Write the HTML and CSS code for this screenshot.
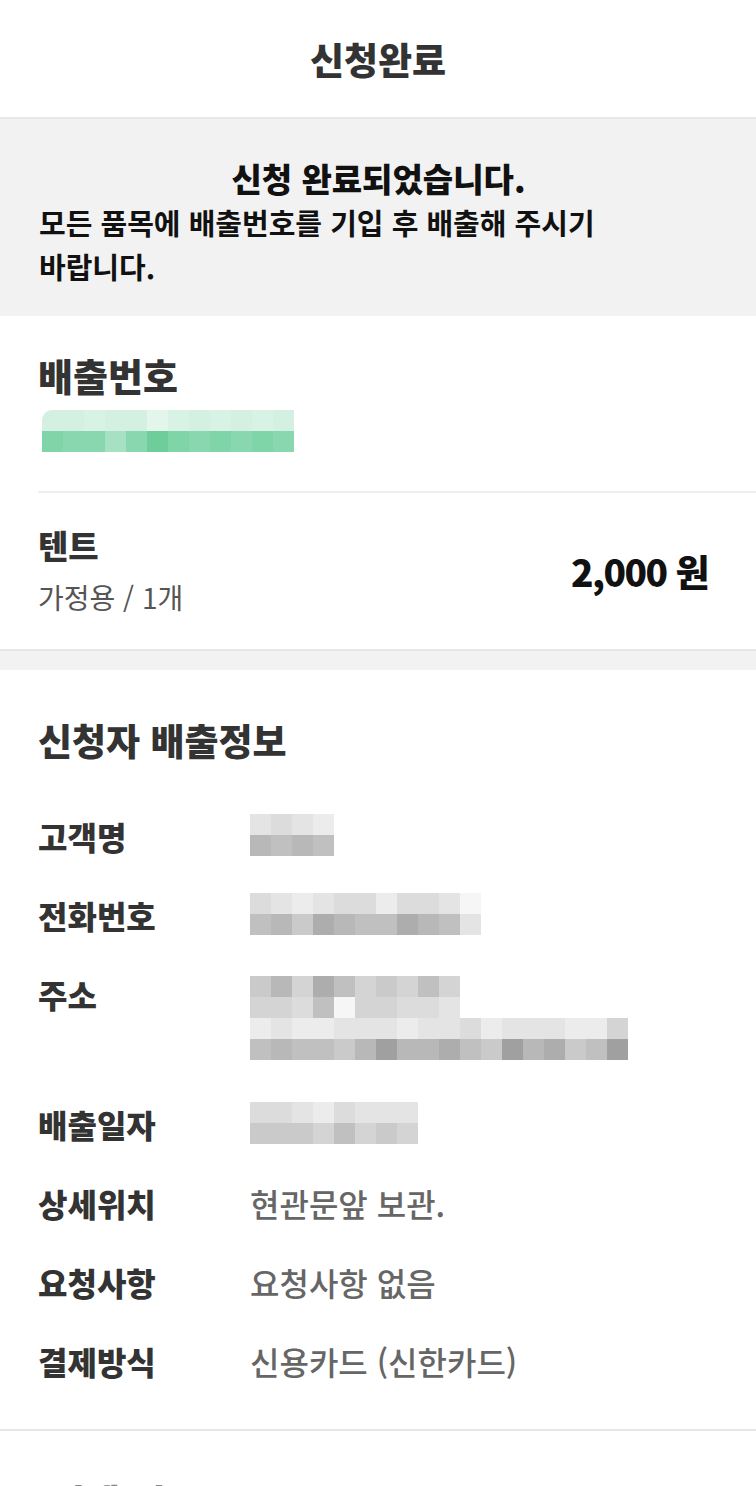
FILE: index.html
```html
<!DOCTYPE html>
<html lang="ko">
<head>
<meta charset="utf-8">
<title>신청완료</title>
<link rel="stylesheet" href="styles.css">
</head>
<body>
<div class="page">
  <header class="topbar">
    <h1 class="topbar-title">신청완료</h1>
  </header>

  <section class="notice">
    <p class="notice-title">신청 완료되었습니다.</p>
    <p class="notice-body">모든 품목에 배출번호를 기입 후 배출해 주시기 바랍니다.</p>
  </section>

  <section class="card">
    <h2 class="card-heading">배출번호</h2>
    <div class="mosaic mosaic-green">
      <div class="mrow">
        <span class="ga"></span><span class="ga"></span><span class="gb"></span><span class="ga"></span><span class="ga"></span><span class="gc"></span><span class="gb"></span><span class="ga"></span><span class="gb"></span><span class="ga"></span><span class="gb"></span><span class="ga"></span>
      </div>
      <div class="mrow">
        <span class="gd"></span><span class="ge"></span><span class="ge"></span><span class="gf"></span><span class="ge"></span><span class="gg"></span><span class="gd"></span><span class="ge"></span><span class="gd"></span><span class="ge"></span><span class="gd"></span><span class="ge"></span>
      </div>
    </div>
    <div class="divider"></div>
    <div class="item">
      <div class="item-info">
        <p class="item-name">텐트</p>
        <p class="item-sub">가정용 / 1개</p>
      </div>
      <p class="item-price">2,000 원</p>
    </div>
  </section>

  <div class="gap"></div>

  <section class="card info">
    <h2 class="card-heading info-heading">신청자 배출정보</h2>
    <dl class="rows">
      <div class="row">
        <dt class="label">고객명</dt>
        <dd class="value">
          <div class="mosaic">
            <div class="mrow"><span class="k2"></span><span class="k3"></span><span class="k2"></span><span class="k1"></span></div>
            <div class="mrow"><span class="k7"></span><span class="k6"></span><span class="k7"></span><span class="k6"></span></div>
          </div>
        </dd>
      </div>
      <div class="row">
        <dt class="label">전화번호</dt>
        <dd class="value">
          <div class="mosaic">
            <div class="mrow"><span class="k3"></span><span class="k2"></span><span class="k1"></span><span class="k2"></span><span class="k3"></span><span class="k3"></span><span class="k1"></span><span class="k3"></span><span class="k3"></span><span class="k2"></span><span class="k0"></span></div>
            <div class="mrow"><span class="k6"></span><span class="k7"></span><span class="k5"></span><span class="k8"></span><span class="k7"></span><span class="k6"></span><span class="k6"></span><span class="k8"></span><span class="k7"></span><span class="k6"></span><span class="k2"></span></div>
          </div>
        </dd>
      </div>
      <div class="row">
        <dt class="label">주소</dt>
        <dd class="value value-2line">
          <div class="mosaic">
            <div class="mrow"><span class="k5"></span><span class="k7"></span><span class="k4"></span><span class="k8"></span><span class="k6"></span><span class="k4"></span><span class="k5"></span><span class="k4"></span><span class="k6"></span><span class="k4"></span></div>
            <div class="mrow"><span class="k4"></span><span class="k4"></span><span class="k3"></span><span class="k6"></span><span class="k0"></span><span class="k4"></span><span class="k4"></span><span class="k3"></span><span class="k3"></span><span class="k2"></span></div>
            <div class="mrow"><span class="k1"></span><span class="k2"></span><span class="k1"></span><span class="k1"></span><span class="k2"></span><span class="k2"></span><span class="k2"></span><span class="k1"></span><span class="k2"></span><span class="k2"></span><span class="k3"></span><span class="k1"></span><span class="k2"></span><span class="k2"></span><span class="k2"></span><span class="k1"></span><span class="k1"></span><span class="k4"></span></div>
            <div class="mrow"><span class="k6"></span><span class="k7"></span><span class="k6"></span><span class="k6"></span><span class="k5"></span><span class="k7"></span><span class="k9"></span><span class="k7"></span><span class="k7"></span><span class="k8"></span><span class="k6"></span><span class="k5"></span><span class="k9"></span><span class="k7"></span><span class="k8"></span><span class="k5"></span><span class="k6"></span><span class="k9"></span></div>
          </div>
        </dd>
      </div>
      <div class="row">
        <dt class="label">배출일자</dt>
        <dd class="value">
          <div class="mosaic">
            <div class="mrow"><span class="k3"></span><span class="k3"></span><span class="k2"></span><span class="k1"></span><span class="k3"></span><span class="k2"></span><span class="k2"></span><span class="k2"></span></div>
            <div class="mrow"><span class="k5"></span><span class="k5"></span><span class="k5"></span><span class="k4"></span><span class="k6"></span><span class="k4"></span><span class="k5"></span><span class="k4"></span></div>
          </div>
        </dd>
      </div>
      <div class="row">
        <dt class="label">상세위치</dt>
        <dd class="value">현관문앞 보관.</dd>
      </div>
      <div class="row">
        <dt class="label">요청사항</dt>
        <dd class="value">요청사항 없음</dd>
      </div>
      <div class="row">
        <dt class="label">결제방식</dt>
        <dd class="value">신용카드 (신한카드)</dd>
      </div>
    </dl>
  </section>

  <section class="card next">
    <h2 class="card-heading next-heading">결제 정보</h2>
  </section>
</div>
</body>
</html>
```

FILE: styles.css
```css
* { box-sizing: border-box; }
html, body { margin: 0; padding: 0; background: #fff; }
body {
  font-family: "Noto Sans CJK KR", "Noto Sans", sans-serif;
  color: #333;
}
p, h1, h2, dl, dd, dt { margin: 0; }

.page {
  width: 756px;
  height: 1486px;
  overflow: hidden;
}

.topbar {
  height: 119px;
  display: flex;
  align-items: center;
  justify-content: center;
  border-bottom: 2px solid #e8e8e8;
}
.topbar-title {
  font-size: 37px;
  font-weight: 800;
  color: #333;
  line-height: 44px;
}

.notice {
  background: #f2f2f2;
  padding: 37px 38px 28px 39px;
  color: #111;
  font-weight: 700;
  line-height: 44px;
  word-break: keep-all;
}
.notice-title {
  text-align: center;
  font-size: 33px;
  font-weight: 800;
}
.notice-body {
  font-size: 29px;
  max-width: 600px;
}

.card {
  background: #fff;
  padding-left: 38px;
}
.card-heading {
  font-size: 38px;
  font-weight: 800;
  color: #333;
  line-height: 44px;
  padding-top: 37px;
}

.mosaic {
  display: flex;
  flex-direction: column;
}
.mrow { display: flex; }
.mrow span {
  display: block;
  width: 21px;
  height: 21px;
}
.mosaic-green { margin-top: 13px; padding-left: 4px; }
.mosaic-green .mrow:first-child span:first-child { border-top-left-radius: 10px; }
.ga { background: #d4f0e1; }
.gb { background: #d9f2e6; }
.gc { background: #e3f6ec; }
.gd { background: #7fd4a8; }
.ge { background: #88d7ae; }
.gf { background: #a6e1c3; }
.gg { background: #6fcd9c; }

.k0 { background: #f6f6f6; }
.k1 { background: #ececec; }
.k2 { background: #e4e4e4; }
.k3 { background: #dcdcdc; }
.k4 { background: #d4d4d4; }
.k5 { background: #cacaca; }
.k6 { background: #c0c0c0; }
.k7 { background: #b8b8b8; }
.k8 { background: #adadad; }
.k9 { background: #a0a0a0; }

.divider {
  height: 2px;
  background: #eeeeee;
  margin-top: 39px;
}

.item {
  display: flex;
  align-items: center;
  justify-content: space-between;
  padding: 30px 48px 30px 0;
}
.item-name {
  font-size: 33px;
  font-weight: 800;
  color: #333;
  line-height: 44px;
}
.item-sub {
  font-size: 28px;
  font-weight: 400;
  color: #555;
  line-height: 44px;
  margin-top: 8px;
}
.item-price {
  font-size: 37px;
  font-weight: 800;
  color: #111;
  letter-spacing: -1.5px;
}

.gap {
  height: 21px;
  background: #f2f2f2;
  border-top: 2px solid #e6e6e6;
}

.info-heading { padding-top: 48px; font-size: 37px; }

.rows {
  margin-top: 35px;
  padding-bottom: 28px;
}
.row {
  display: flex;
  padding: 14px 0 15px;
}
.label {
  width: 212px;
  flex-shrink: 0;
  font-size: 32px;
  font-weight: 800;
  color: #333;
  line-height: 50px;
}
.value {
  font-size: 32px;
  font-weight: 500;
  color: #666;
  line-height: 50px;
}
.value .mosaic { padding-top: 3px; }
.value-2line { min-height: 101px; }
.value-2line .mosaic { padding-top: 7px; }

.next {
  border-top: 2px solid #e6e6e6;
}
.next-heading {
  padding-top: 48px;
  padding-left: 12px;
  color: #888;
}
```
